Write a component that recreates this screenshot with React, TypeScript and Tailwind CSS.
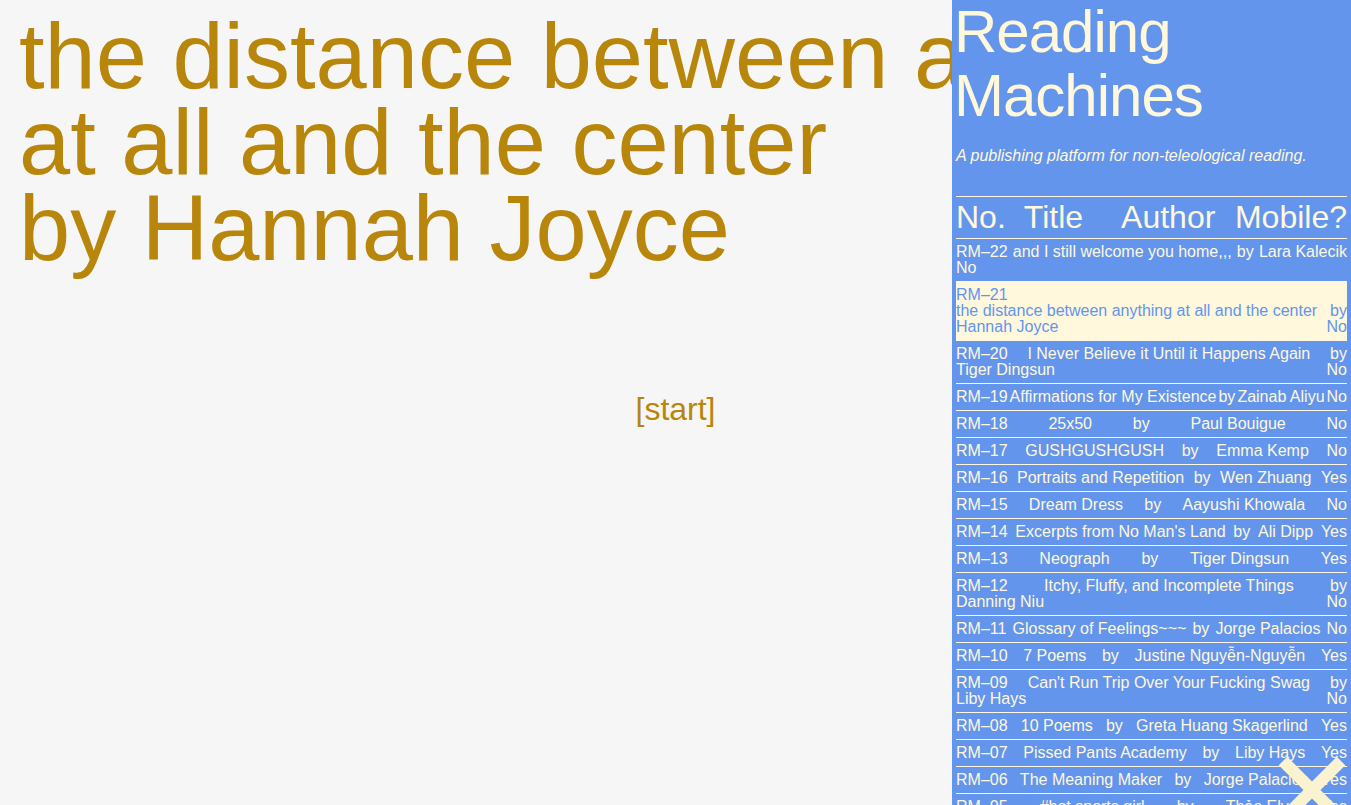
import React from 'react';

interface Issue {
  no: string;
  title: string;
  author: string;
  mobile: 'Yes' | 'No';
}

const issues: Issue[] = [
  { no: 'RM–22', title: 'and I still welcome you home,,,', author: 'Lara Kalecik', mobile: 'No' },
  { no: 'RM–21', title: 'the distance between anything at all and the center', author: 'Hannah Joyce', mobile: 'No' },
  { no: 'RM–20', title: 'I Never Believe it Until it Happens Again', author: 'Tiger Dingsun', mobile: 'No' },
  { no: 'RM–19', title: 'Affirmations for My Existence', author: 'Zainab Aliyu', mobile: 'No' },
  { no: 'RM–18', title: '25x50', author: 'Paul Bouigue', mobile: 'No' },
  { no: 'RM–17', title: 'GUSHGUSHGUSH', author: 'Emma Kemp', mobile: 'No' },
  { no: 'RM–16', title: 'Portraits and Repetition', author: 'Wen Zhuang', mobile: 'Yes' },
  { no: 'RM–15', title: 'Dream Dress', author: 'Aayushi Khowala', mobile: 'No' },
  { no: 'RM–14', title: "Excerpts from No Man's Land", author: 'Ali Dipp', mobile: 'Yes' },
  { no: 'RM–13', title: 'Neograph', author: 'Tiger Dingsun', mobile: 'Yes' },
  { no: 'RM–12', title: 'Itchy, Fluffy, and Incomplete Things', author: 'Danning Niu', mobile: 'No' },
  { no: 'RM–11', title: 'Glossary of Feelings~~~', author: 'Jorge Palacios', mobile: 'No' },
  { no: 'RM–10', title: '7 Poems', author: 'Justine Nguyễn-Nguyễn', mobile: 'Yes' },
  { no: 'RM–09', title: "Can't Run Trip Over Your Fucking Swag", author: 'Liby Hays', mobile: 'No' },
  { no: 'RM–08', title: '10 Poems', author: 'Greta Huang Skagerlind', mobile: 'Yes' },
  { no: 'RM–07', title: 'Pissed Pants Academy', author: 'Liby Hays', mobile: 'Yes' },
  { no: 'RM–06', title: 'The Meaning Maker', author: 'Jorge Palacios', mobile: 'Yes' },
  { no: 'RM–05', title: '#hot sports girl', author: 'Thảo Ely', mobile: 'Yes' },
];

const current = 'RM–21';

const IssueRow: React.FC<{ issue: Issue }> = ({ issue }) => {
  const active = issue.no === current;
  return (
    <a
      href="#"
      className={
        active
          ? 'flex flex-wrap justify-between border-t border-[#fff8e1] bg-[#fff8dc] py-[5px] text-[16px] leading-[16px] text-[#6495ed]'
          : 'flex flex-wrap justify-between border-t border-[#fff8e1] py-[5px] text-[16px] leading-[16px] text-[#fff8dc]'
      }
    >
      <span>{issue.no}</span>
      <span>{issue.title}</span>
      <span>by</span>
      <span>{issue.author}</span>
      <span>{issue.mobile}</span>
    </a>
  );
};

export default function App() {
  return (
    <div className="relative h-screen w-full overflow-hidden bg-[#f6f6f6] font-['Liberation_Sans',Arial,Helvetica,sans-serif]">
      <main className="px-[19px] pt-[13px]">
        <h1 className="text-[92px] leading-[86px] text-[#b8860b]">
          the distance between anything at all and the center
          <br />
          by Hannah Joyce
        </h1>
        <div className="mt-[120px] flex justify-center">
          <button className="text-[32px] leading-[37px] text-[#b8860b]">[start]</button>
        </div>
      </main>

      <aside className="fixed right-0 top-0 h-screen w-[399px] overflow-hidden bg-[#6495ed] px-[4px] text-[#fff8dc]">
        <h2 className="-ml-[2px] text-[60px] leading-[64px] tracking-[-1px]">
          Reading
          <br />
          Machines
        </h2>
        <p className="mt-[20px] text-[16px] italic leading-[16px]">
          A publishing platform for non-teleological reading.
        </p>
        <div className="mt-[32px]">
          <div className="flex border-t border-[#fff8e1] py-[2px] text-[32px] leading-[37px]">
            <span>No.</span>
            <span className="ml-[18px]">Title</span>
            <span className="ml-[38px]">Author</span>
            <span className="ml-auto">Mobile?</span>
          </div>
          {issues.map((issue) => (
            <IssueRow key={issue.no} issue={issue} />
          ))}
        </div>
      </aside>

      <button className="fixed bottom-[-20px] right-[4px]" aria-label="close">
        <svg width="70" height="70" viewBox="0 0 70 70">
          <line x1="6" y1="6" x2="64" y2="64" stroke="#fbf2cf" strokeWidth="12" />
          <line x1="64" y1="6" x2="6" y2="64" stroke="#fbf2cf" strokeWidth="12" />
        </svg>
      </button>
    </div>
  );
}
